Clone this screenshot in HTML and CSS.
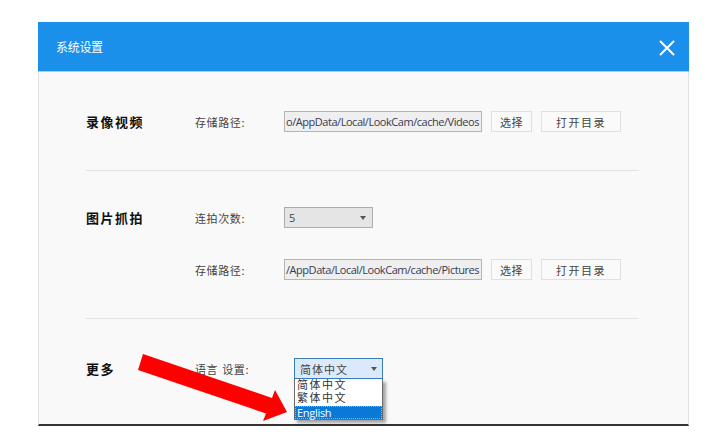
FILE: index.html
```html
<!DOCTYPE html>
<html lang="zh-CN">
<head>
<meta charset="utf-8">
<title>系统设置</title>
<link rel="stylesheet" href="styles.css">
</head>
<body>
<div class="dialog">
  <div class="header">
    <span class="title">系统设置</span>
    <svg class="close" width="16" height="16" viewBox="0 0 16 16">
      <path d="M1 1 L15 15 M15 1 L1 15" stroke="#fff" stroke-width="2" fill="none"/>
    </svg>
  </div>
  <div class="content">
    <section class="sec sec1">
      <div class="sec-title">录像视频</div>
      <div class="rows">
        <div class="row">
          <span class="flabel">存储路径:</span>
          <div class="path"><span>o/AppData/Local/LookCam/cache/Videos</span></div>
          <button class="btn btn-s">选择</button>
          <button class="btn btn-l">打开目录</button>
        </div>
      </div>
    </section>
    <div class="divider"></div>
    <section class="sec sec2">
      <div class="sec-title">图片抓拍</div>
      <div class="rows">
        <div class="row">
          <span class="flabel">连拍次数:</span>
          <div class="select"><span>5</span><i class="caret"></i></div>
        </div>
        <div class="row">
          <span class="flabel">存储路径:</span>
          <div class="path"><span>/AppData/Local/LookCam/cache/Pictures</span></div>
          <button class="btn btn-s">选择</button>
          <button class="btn btn-l">打开目录</button>
        </div>
      </div>
    </section>
    <div class="divider"></div>
    <section class="sec sec3">
      <div class="sec-title">更多</div>
      <div class="rows">
        <div class="row">
          <span class="flabel">语言<span class="gap"></span>设置:</span>
          <div class="lang">
            <div class="select select-open"><span>简体中文</span><i class="caret"></i></div>
            <ul class="dropdown">
              <li>简体中文</li>
              <li>繁体中文</li>
              <li class="active">English</li>
            </ul>
          </div>
        </div>
      </div>
    </section>
  </div>
</div>
<svg class="arrow" width="727" height="442" viewBox="0 0 727 442">
  <polygon points="143,354 272,398 275,390 287,412 263,421 266,413.5 138,370" fill="#ff0000"/>
</svg>
</body>
</html>
```

FILE: styles.css
```css
html, body {
  margin: 0;
  padding: 0;
  background: #ffffff;
}
body {
  padding: 22px 0 0 38px;
  font-family: "Noto Sans CJK SC", sans-serif;
  position: relative;
  width: 727px;
  height: 442px;
  box-sizing: border-box;
  overflow: hidden;
}
.dialog {
  width: 651px;
}
.header {
  height: 49px;
  background: #1b90ea;
  border-bottom: 1px solid #9ed0f6;
  display: flex;
  align-items: center;
  justify-content: space-between;
  padding: 0 14px 0 18px;
}
.title {
  color: #ffffff;
  font-size: 12px;
  letter-spacing: -0.3px;
}
.close {
  display: block;
  margin-top: 2px;
}
.content {
  box-sizing: border-box;
  background: #f9f9f9;
  border-left: 1px solid #e2e2e2;
  border-right: 1px solid #e2e2e2;
  border-bottom: 2px solid #333333;
  padding: 0 49px 0 47px;
  height: 354px;
}
.sec {
  display: flex;
}
.sec1 { padding: 39px 0 38px; }
.sec2 { padding: 36px 0 38px; }
.sec3 { padding: 39px 0 0; }
.sec-title {
  width: 109px;
  font-size: 13px;
  font-weight: bold;
  color: #111111;
  letter-spacing: 1.5px;
  line-height: 21px;
  height: 21px;
}
.rows {
  display: flex;
  flex-direction: column;
  gap: 31px;
}
.row {
  display: flex;
  align-items: center;
  height: 21px;
}
.flabel {
  width: 89px;
  font-size: 11px;
  color: #444444;
  letter-spacing: 0.6px;
  white-space: nowrap;
}
.gap {
  display: inline-block;
  width: 4px;
}
.path {
  width: 198px;
  height: 21px;
  box-sizing: border-box;
  border: 1px solid #b4b4b4;
  background: #efefef;
  display: flex;
  align-items: center;
  overflow: hidden;
  padding: 0 1px;
  white-space: nowrap;
}
.path span {
  font-family: "Open Sans", "Noto Sans", sans-serif;
  font-size: 11px;
  color: #3a3a52;
  letter-spacing: -0.46px;
}
.btn {
  height: 21px;
  box-sizing: border-box;
  border: 1px solid #e0e0e0;
  background: #fafafa;
  font-family: "Noto Sans CJK SC", sans-serif;
  font-size: 11px;
  color: #444444;
  padding: 0;
  margin-left: 9px;
}
.btn-s { width: 41px; letter-spacing: 0.5px; }
.btn-l { width: 80px; letter-spacing: 1.5px; }
.select {
  width: 89px;
  height: 21px;
  box-sizing: border-box;
  border: 1px solid #acacac;
  background: #e5e5e5;
  display: flex;
  align-items: center;
  justify-content: space-between;
  padding: 0 6px 0 4px;
  font-family: "Open Sans", "Noto Sans", sans-serif;
  font-size: 11px;
  color: #444444;
}
.caret {
  width: 0;
  height: 0;
  border-left: 3.5px solid transparent;
  border-right: 3.5px solid transparent;
  border-top: 4px solid #555555;
}
.lang {
  position: relative;
  margin-left: 10px;
}
.select-open {
  border-color: #3a7cb8;
  background: #dbeafa;
  font-family: "Noto Sans CJK SC", sans-serif;
  font-size: 11px;
  color: #444444;
  padding: 0 5px 0 5px;
  letter-spacing: 1px;
}
.dropdown {
  position: absolute;
  left: 0;
  top: 21px;
  width: 89px;
  box-sizing: border-box;
  margin: 0;
  padding: 0;
  list-style: none;
  background: #ffffff;
  border: 1px solid #6a6a6a;
  border-top: none;
  box-shadow: 3px 3px 3px rgba(0, 0, 0, 0.35);
}
.dropdown li {
  height: 13px;
  line-height: 13px;
  font-family: "Liberation Sans", "Noto Sans CJK SC", sans-serif;
  font-size: 11px;
  color: #333333;
  padding-left: 2px;
  letter-spacing: 1.5px;
}
.dropdown li.active {
  background: #0a78d6;
  color: #ffffff;
  outline: 1px dotted #e8a050;
  outline-offset: -1px;
  font-family: "Open Sans", "Noto Sans", sans-serif;
  letter-spacing: -0.3px;
  font-size: 11px;
  margin-top: 1px;
}
.divider {
  height: 1px;
  background: #e3e3e3;
}
.arrow {
  position: absolute;
  left: 0;
  top: 0;
  pointer-events: none;
}
```
